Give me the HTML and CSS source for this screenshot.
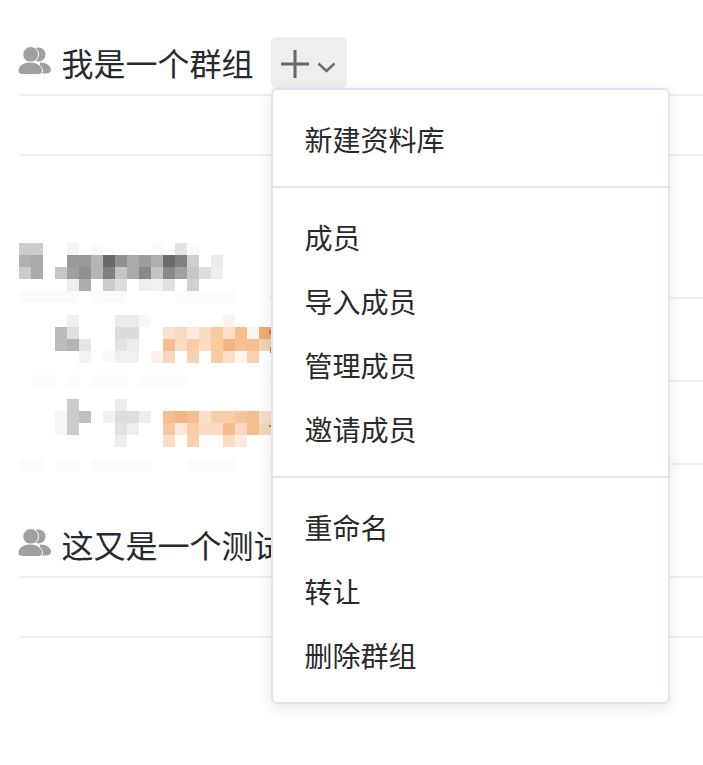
FILE: index.html
```html
<!DOCTYPE html>
<html lang="zh-CN">

<head>
  <meta charset="UTF-8">
  <meta name="viewport" content="width=device-width, initial-scale=1.0">
  <title>群组</title>
  <link rel="stylesheet" href="styles.css">
</head>

<body>
  <!--group 1-->
  <section class="group">
    <div class="group-head">
      <svg class="group-icon" width="34" height="30" viewBox="0 0 34 30">
        <circle cx="20.500" cy="8.500" r="7" fill="#a0a0a0" />
        <path d="M22 16.500c6.500 0 11 3.500 11 7.500 0 2-2 3.500-5 3.500h-6z" fill="#a0a0a0" />
        <circle cx="12.700" cy="8.500" r="7.900" fill="#a0a0a0" stroke="#fff" stroke-width="1" />
        <path d="M12 16c7.500 0 12.500 4.500 12.500 9 0 2.200-2 3.500-5 3.500H5c-3 0-5-1.300-5-3.500 0-4.500 4.500-9 12-9z" fill="#a0a0a0" stroke="#fff" stroke-width="1" />
      </svg>
      <h2 class="group-title">我是一个群组</h2>
      <button class="add-btn" type="button">
        <svg class="plus" width="28" height="28" viewBox="0 0 28 28">
          <path d="M14 0v28M0 14h28" stroke="#666" stroke-width="3" fill="none" />
        </svg>
        <svg class="chevron" width="19" height="11" viewBox="0 0 19 11">
          <path d="M1.500 1.500L9.500 9l8-7.500" stroke="#6b6f73" stroke-width="2.500" fill="none" />
        </svg>
      </button>

      <div class="menu">
        <ul class="menu-list">
          <li>新建资料库</li>
        </ul>
        <hr>
        <ul class="menu-list">
          <li>成员</li>
          <li>导入成员</li>
          <li>管理成员</li>
          <li>邀请成员</li>
        </ul>
        <hr>
        <ul class="menu-list">
          <li>重命名</li>
          <li>转让</li>
          <li>删除群组</li>
        </ul>
      </div>
    </div>
    <div class="row row-empty"></div>
  </section>

  <!--pixelated rows-->
  <section class="blocked">
    <div class="row row-tall"></div>
    <div class="row"></div>
    <div class="row"></div>

    <svg class="mosaic" width="252" height="228" viewBox="0 0 252 228">
      <rect class="mosaic-bg" x="0" y="0" fill="#fff" />
      <g class="cells">
        <rect x="0" y="0" fill="#ccc" /><rect x="12" y="0" fill="#ccc" /><rect x="48" y="0" fill="#f3f4f3" /><rect x="72" y="0" fill="#fafafa" /><rect x="132" y="0" fill="#fafafa" /><rect x="156" y="0" fill="#e3e3e3" /><rect x="168" y="0" fill="#fafafa" />

        <rect x="0" y="12" fill="#b0b0b0" /><rect x="12" y="12" fill="#aaa" /><rect x="48" y="12" fill="#999" /><rect x="60" y="12" fill="#999" /><rect x="72" y="12" fill="#b5b5b5" /><rect x="84" y="12" fill="#666a6c" /><rect x="96" y="12" fill="#909090" /><rect x="108" y="12" fill="#aaa" /><rect x="120" y="12" fill="#9c9c9c" /><rect x="132" y="12" fill="#aeaeae" /><rect x="144" y="12" fill="#6a6b6e" /><rect x="156" y="12" fill="#808080" /><rect x="168" y="12" fill="#cdd0d0" /><rect x="192" y="12" fill="#ebebeb" />

        <rect x="0" y="24" fill="#ccc" /><rect x="12" y="24" fill="#aaa" /><rect x="36" y="24" fill="#c6c7c9" /><rect x="48" y="24" fill="#9fa0a2" /><rect x="60" y="24" fill="#909090" /><rect x="72" y="24" fill="#b5b5b5" /><rect x="84" y="24" fill="#7c8082" /><rect x="96" y="24" fill="#c4c4c4" /><rect x="108" y="24" fill="#aaa" /><rect x="120" y="24" fill="#888" /><rect x="132" y="24" fill="#c4c4c4" /><rect x="144" y="24" fill="#888" /><rect x="156" y="24" fill="#a0a0a0" /><rect x="168" y="24" fill="#c8c8c8" /><rect x="180" y="24" fill="#ddd" /><rect x="192" y="24" fill="#eee" />

        <rect x="48" y="36" fill="#eee" /><rect x="60" y="36" fill="#adadad" /><rect x="84" y="36" fill="#ccc" /><rect x="96" y="36" fill="#ddd" /><rect x="120" y="36" fill="#eee" /><rect x="132" y="36" fill="#f0f0f0" /><rect x="144" y="36" fill="#e0e2e2" /><rect x="168" y="36" fill="#d0d0d0" />

        <rect x="0" y="48" fill="#fafafa" /><rect x="12" y="48" fill="#fafafa" /><rect x="24" y="48" fill="#fafafa" /><rect x="36" y="48" fill="#fafafa" /><rect x="48" y="48" fill="#fafafa" /><rect x="72" y="48" fill="#fbfbfb" /><rect x="84" y="48" fill="#fafafa" /><rect x="96" y="48" fill="#fafafa" /><rect x="156" y="48" fill="#fbfbfb" /><rect x="168" y="48" fill="#fbfbfb" /><rect x="180" y="48" fill="#fbfbfb" /><rect x="192" y="48" fill="#fbfbfb" /><rect x="204" y="48" fill="#fbfbfb" />

        <rect x="48" y="72" fill="#f0f0f0" /><rect x="96" y="72" fill="#ececec" /><rect x="108" y="72" fill="#ececec" /><rect x="120" y="72" fill="#f8f8f8" /><rect x="204" y="72" fill="#fdf3ec" />

        <rect x="36" y="84" fill="#bbb" /><rect x="48" y="84" fill="#e0e0e0" /><rect x="96" y="84" fill="#dcdcdc" /><rect x="108" y="84" fill="#dcdcdc" /><rect x="144" y="84" fill="#fbe2d0" /><rect x="156" y="84" fill="#fad9bf" /><rect x="168" y="84" fill="#fdeade" /><rect x="180" y="84" fill="#fbdcc3" /><rect x="192" y="84" fill="#f8cba0" /><rect x="204" y="84" fill="#fbdfc8" /><rect x="216" y="84" fill="#f6bf8f" /><rect x="228" y="84" fill="#fdf5ef" /><rect x="240" y="84" fill="#f0ad74" />

        <rect x="36" y="96" fill="#bbb" /><rect x="48" y="96" fill="#b3b3b3" /><rect x="60" y="96" fill="#e5e5e5" /><rect x="96" y="96" fill="#e2e2e2" /><rect x="108" y="96" fill="#ececec" /><rect x="144" y="96" fill="#f6bf8f" /><rect x="156" y="96" fill="#fbdcc3" /><rect x="168" y="96" fill="#f8cda8" /><rect x="180" y="96" fill="#fbdcc3" /><rect x="192" y="96" fill="#f8cba0" /><rect x="204" y="96" fill="#f6b581" /><rect x="216" y="96" fill="#f7c096" /><rect x="228" y="96" fill="#f6bf8f" /><rect x="240" y="96" fill="#f3d2b5" />

        <rect x="60" y="108" fill="#f3f3f3" /><rect x="84" y="108" fill="#f9f9f9" /><rect x="96" y="108" fill="#f0f0f0" /><rect x="108" y="108" fill="#f0f0f0" /><rect x="132" y="108" fill="#fdf0e6" /><rect x="144" y="108" fill="#fbd6bb" /><rect x="168" y="108" fill="#f9d1ae" /><rect x="192" y="108" fill="#f8cba0" /><rect x="204" y="108" fill="#fbdfc8" /><rect x="216" y="108" fill="#fdf5ef" /><rect x="228" y="108" fill="#f9d1ae" />

        <rect x="12" y="132" fill="#fbfbfb" /><rect x="24" y="132" fill="#fbfbfb" /><rect x="48" y="132" fill="#fbfbfb" /><rect x="72" y="132" fill="#fbfbfb" /><rect x="84" y="132" fill="#fbfbfb" /><rect x="96" y="132" fill="#fbfbfb" /><rect x="120" y="132" fill="#fbfbfb" /><rect x="132" y="132" fill="#fbfbfb" /><rect x="144" y="132" fill="#fbfbfb" /><rect x="156" y="132" fill="#fbfbfb" />

        <rect x="48" y="156" fill="#ccc" /><rect x="96" y="156" fill="#ececec" />

        <rect x="36" y="168" fill="#f6f6f6" /><rect x="48" y="168" fill="#ccc" /><rect x="60" y="168" fill="#c0c0c0" /><rect x="84" y="168" fill="#f2f2f2" /><rect x="96" y="168" fill="#dedede" /><rect x="108" y="168" fill="#dedede" /><rect x="120" y="168" fill="#eee" /><rect x="144" y="168" fill="#f6bf8f" /><rect x="156" y="168" fill="#f5b582" /><rect x="168" y="168" fill="#f6bf8f" /><rect x="180" y="168" fill="#fbdfc8" /><rect x="192" y="168" fill="#f8cda8" /><rect x="204" y="168" fill="#f8cda8" /><rect x="216" y="168" fill="#f7c39a" /><rect x="228" y="168" fill="#f6bf8f" /><rect x="240" y="168" fill="#f9dcc4" />

        <rect x="36" y="180" fill="#f6f6f6" /><rect x="48" y="180" fill="#ccc" /><rect x="96" y="180" fill="#e2e2e2" /><rect x="108" y="180" fill="#eee" /><rect x="144" y="180" fill="#f7c8a0" /><rect x="156" y="180" fill="#fbe8da" /><rect x="168" y="180" fill="#f8cda8" /><rect x="180" y="180" fill="#fbdcc3" /><rect x="192" y="180" fill="#fbdcc3" /><rect x="204" y="180" fill="#f6bd8f" /><rect x="216" y="180" fill="#fbd9bf" /><rect x="228" y="180" fill="#f6bf8f" /><rect x="240" y="180" fill="#f3d5bb" />

        <rect x="96" y="192" fill="#eee" /><rect x="144" y="192" fill="#fbdcc3" /><rect x="168" y="192" fill="#f8d1ae" /><rect x="204" y="192" fill="#fbdcc3" /><rect x="216" y="192" fill="#fdeade" />

        <rect x="0" y="216" fill="#fbfbfb" /><rect x="12" y="216" fill="#fbfbfb" /><rect x="36" y="216" fill="#fbfbfb" /><rect x="48" y="216" fill="#fbfbfb" /><rect x="72" y="216" fill="#fbfbfb" /><rect x="84" y="216" fill="#fbfbfb" /><rect x="96" y="216" fill="#fbfbfb" /><rect x="108" y="216" fill="#fbfbfb" /><rect x="120" y="216" fill="#fbfbfb" /><rect x="168" y="216" fill="#fbfbfb" /><rect x="180" y="216" fill="#fbfbfb" /><rect x="192" y="216" fill="#fbfbfb" /><rect x="204" y="216" fill="#fbfbfb" />
      </g>
      <!--bits of orange text that stick out past the mosaic-->
      <path d="M250 87h2v4h-2zM251 104h1v6h-1zM250 182h2v2h-2z" fill="#e07a2a" />
    </svg>
  </section>

  <!--group 2-->
  <section class="group group-second">
    <div class="group-head">
      <svg class="group-icon" width="34" height="30" viewBox="0 0 34 30">
        <circle cx="20.500" cy="8.500" r="7" fill="#a0a0a0" />
        <path d="M22 16.500c6.500 0 11 3.500 11 7.500 0 2-2 3.500-5 3.500h-6z" fill="#a0a0a0" />
        <circle cx="12.700" cy="8.500" r="7.900" fill="#a0a0a0" stroke="#fff" stroke-width="1" />
        <path d="M12 16c7.500 0 12.500 4.500 12.500 9 0 2.200-2 3.500-5 3.500H5c-3 0-5-1.300-5-3.500 0-4.500 4.500-9 12-9z" fill="#a0a0a0" stroke="#fff" stroke-width="1" />
      </svg>
      <h2 class="group-title">这又是一个测试</h2>
    </div>
    <div class="row row-empty"></div>
  </section>
</body>

</html>
```

FILE: styles.css
```css
html,
body {
  margin: 0;
  background: #fff;
  overflow: hidden;
}

body {
  height: 765px;
  padding: 37px 0 0 19px;
  box-sizing: border-box;
  font-family: "Liberation Sans", "Noto Sans CJK SC", sans-serif;
  color: #262a2d;
}

/*group header*/
.group-head {
  position: relative;
  display: flex;
  align-items: center;
  height: 51px;
  padding-bottom: 6px;
  border-bottom: 2px solid #eef0f2;
}

.group-icon {
  flex: none;
  margin: 0 9.5px 0 -1px;
  position: relative;
  top: -2px;
}

.group-title {
  max-width: 209px;
  margin: 0;
  padding-top: 6px;
  overflow: hidden;
  font-size: 32px;
  font-weight: normal;
  line-height: 51px;
  white-space: nowrap;
}

.add-btn {
  display: flex;
  align-items: center;
  flex: none;
  width: 76px;
  height: 51px;
  margin-left: 17.5px;
  padding: 0 0 0 10px;
  border: 0;
  border-radius: 6px;
  background: #eee;
}

.plus {
  margin-top: 3px;
}

.chevron {
  margin: 9px 0 0 8px;
}

/*dropdown*/
.menu {
  position: absolute;
  top: 51px;
  left: 252px;
  z-index: 5;
  width: 399px;
  height: 616px;
  box-sizing: border-box;
  padding: 18px 0 14px;
  border: 2px solid #e2e6ec;
  border-radius: 6px;
  background: #fff;
  box-shadow: 0 4px 16px rgba(40, 50, 70, 0.1);
}

.menu-list {
  margin: 0;
  padding: 0;
  list-style: none;
}

.menu-list li {
  height: 64px;
  padding-left: 31.5px;
  font-size: 28px;
  line-height: 68px;
  color: #2a2a2a;
}

.menu hr {
  height: 2px;
  margin: 14px 0 18px;
  border: 0;
  background: #e2e6ec;
}

/*rows*/
.row {
  height: 81px;
  border-bottom: 2px solid #eef0f2;
}

.row-empty {
  height: 58px;
}

.row-tall {
  height: 141px;
}

.blocked {
  position: relative;
}

.mosaic {
  position: absolute;
  top: 87px;
  left: 0;
  display: block;
}

.mosaic-bg {
  width: 250px;
  height: 228px;
}

.cells rect {
  width: 12px;
  height: 12px;
}

.group-second {
  margin-top: 54px;
}
```
